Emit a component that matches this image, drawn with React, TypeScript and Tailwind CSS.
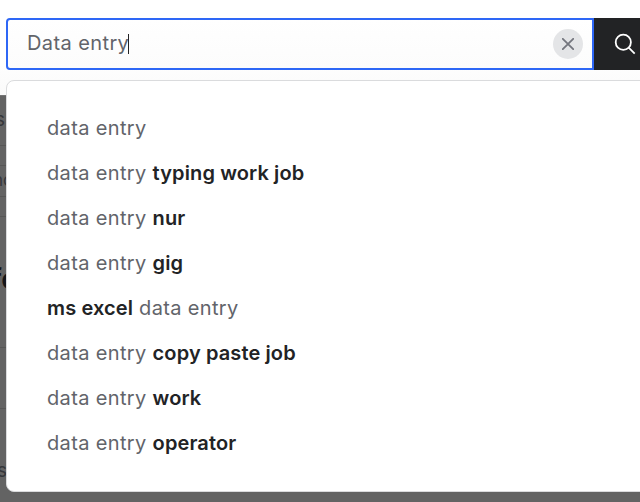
type Part = { text: string; strong?: boolean };

const suggestions: Part[][] = [
  [{ text: "data entry" }],
  [{ text: "data entry" }, { text: "typing work job", strong: true }],
  [{ text: "data entry" }, { text: "nur", strong: true }],
  [{ text: "data entry" }, { text: "gig", strong: true }],
  [{ text: "ms excel", strong: true }, { text: "data entry" }],
  [{ text: "data entry" }, { text: "copy paste job", strong: true }],
  [{ text: "data entry" }, { text: "work", strong: true }],
  [{ text: "data entry" }, { text: "operator", strong: true }],
];

function SearchBar() {
  return (
    <div className="flex h-[52px]">
      <div className="flex w-[588px] shrink-0 items-center rounded-l-[4px] border-2 border-[#2e67f6] bg-gradient-to-b from-white to-[#fcfcfc] pr-[9px] pl-[19px]">
        <span className="-mr-px pb-[3px] text-[20px] leading-[28px] tracking-[0.4px] text-[#62646a]">Data entry</span>
        <span className="h-[20px] w-px bg-[#222325]" />
        <button className="ml-auto flex size-[30px] items-center justify-center rounded-full bg-[#e4e5e7]" aria-label="Clear">
          <svg width="12" height="12" viewBox="0 0 12 12" fill="none" stroke="#74767e" strokeWidth="1.8" strokeLinecap="round">
            <path d="M.8.8l10.4 10.4M11.2.8.8 11.2" />
          </svg>
        </button>
      </div>
      <button className="flex w-[66px] shrink-0 items-center bg-[#222325] pl-[20px]" aria-label="Search">
        <svg width="22" height="22" viewBox="0 0 22 22" fill="none" stroke="#fff" strokeWidth="1.8">
          <circle cx="9.3" cy="9.3" r="7.6" />
          <path d="M14.7 14.7l6 6" />
        </svg>
      </button>
    </div>
  );
}

function DimmedPage() {
  return (
    <div className="h-[407px] w-[8px] overflow-hidden border-t border-[#747474] bg-[#636363] text-[#35363a]">
      <div className="h-[49px] pt-[10px]">
        <span className="-ml-[5px] block text-[19px] leading-[28px]">s</span>
      </div>
      <div className="h-[20px] border-t border-[#565656]" />
      <div className="h-[31px] border-t border-[#565656]">
        <span className="-ml-[7px] block text-[17px] leading-[29px] whitespace-nowrap">no</span>
      </div>
      <div className="h-[20px] border-t border-[#565656]" />
      <div className="h-[131px] border-t border-[#565656] pt-[44px]">
        <span className="-ml-[9px] block text-[28px] leading-[36px] font-semibold whitespace-nowrap text-[#141519]">fo</span>
      </div>
      <div className="h-[61px] border-t border-[#565656]" />
      <div className="border-t border-[#565656] pt-[48px]">
        <span className="-ml-[3px] block text-[19px] leading-[28px]">s</span>
      </div>
    </div>
  );
}

export default function App() {
  return (
    <div className="relative h-[502px] w-[640px] overflow-hidden bg-[#636363] font-['Inter','Liberation_Sans',sans-serif]">
      <header className="h-[95px] bg-gradient-to-b from-white from-60% to-[#fafafa] pt-[18px] pl-[6px]">
        <SearchBar />
      </header>
      <DimmedPage />
      <ul className="absolute top-[80px] left-[6px] h-[412px] w-[660px] rounded-[8px] border border-[#dadbdd] bg-white pt-[24px] pl-[40px]">
        {suggestions.map((parts, row) => (
          <li key={row} className="flex h-[45px] items-center gap-[6px] text-[20px] leading-[28px] whitespace-nowrap">
            {parts.map((part) => (
              <span
                key={part.text}
                className={part.strong ? "font-semibold tracking-[0.12px] text-[#222325]" : "tracking-[0.35px] text-[#62646a]"}
              >
                {part.text}
              </span>
            ))}
          </li>
        ))}
      </ul>
    </div>
  );
}
